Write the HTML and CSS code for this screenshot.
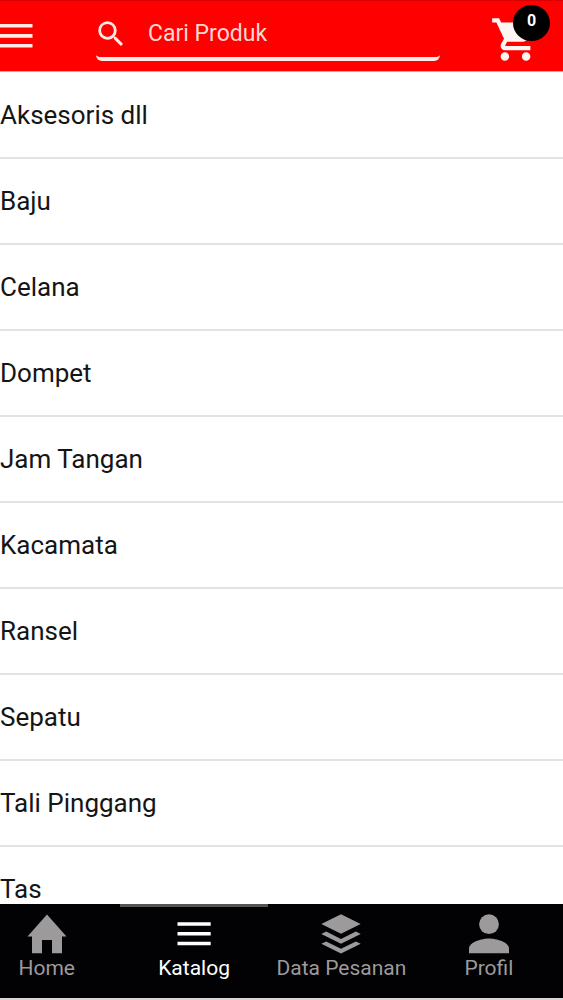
FILE: index.html
```
<!DOCTYPE html>
<html lang="id">
<head>
    <meta charset="UTF-8">
    <meta name="viewport" content="width=device-width, initial-scale=1">
    <title>Katalog</title>
    <link rel="stylesheet" href="styles.css">
</head>
<body>

<div class="page">
    <header class="m-header">
        <a href="#" class="u-menu">
            <svg width="33" height="24" viewBox="0 0 33 24"><path d="M0 0h32.5v3.6H0zM0 10.1h32.5v3.6H0zM0 20h32.5v3.6H0z"/></svg>
        </a>
        <div class="u-search">
            <svg width="34" height="34" viewBox="0 0 24 24"><path d="M15.5 14h-.79l-.28-.27A6.471 6.471 0 0 0 16 9.5 6.5 6.5 0 1 0 9.5 16c1.61 0 3.09-.59 4.23-1.57l.27.28v.79l5 4.99L20.49 19l-4.99-5zm-6 0C7.01 14 5 11.99 5 9.5S7.01 5 9.5 5 14 7.01 14 9.5 11.99 14 9.5 14z"/></svg>
            <span>Cari Produk</span>
        </div>
        <a href="#" class="u-cart">
            <svg width="51" height="51" viewBox="0 0 24 24"><path d="M7 18c-1.1 0-1.99.9-1.99 2S5.9 22 7 22s2-.9 2-2-.9-2-2-2zM1 2v2h2l3.6 7.59-1.35 2.45c-.16.28-.25.61-.25.96 0 1.1.9 2 2 2h12v-2H7.42c-.14 0-.25-.11-.25-.25l.03-.12.9-1.63h7.45c.75 0 1.41-.41 1.75-1.03l3.58-6.49A1.003 1.003 0 0 0 20 4H5.21l-.94-2H1zm16 16c-1.1 0-1.99.9-1.99 2s.89 2 1.99 2 2-.9 2-2-.9-2-2-2z"/></svg>
            <span class="badge">0</span>
        </a>
    </header>

    <ul class="m-list">
        <li>Aksesoris dll</li>
        <li>Baju</li>
        <li>Celana</li>
        <li>Dompet</li>
        <li>Jam Tangan</li>
        <li>Kacamata</li>
        <li>Ransel</li>
        <li>Sepatu</li>
        <li>Tali Pinggang</li>
        <li>Tas</li>
    </ul>

    <nav class="m-tabs">
        <a href="#">
            <svg width="40" height="40" viewBox="0 0 40 40"><path d="M20 .5L39.5 22.5H35V39.2H25V26H15v13.2H5V22.5H.5z"/></svg>
            <span>Home</span>
        </a>
        <a href="#" class="on">
            <svg width="40" height="40" viewBox="0 0 40 40"><path d="M3.5 8.3h33.2v3.5H3.5zM3.5 18.1h33.2v3.5H3.5zM3.5 27.8h33.2v3.5H3.5z"/></svg>
            <span>Katalog</span>
        </a>
        <a href="#">
            <svg width="40" height="40" viewBox="0 0 40 40"><path d="M20 .3L39.7 10 20 19.8.3 10zM5.2 17.6L20 25l14.8-7.4 4.9 2.4L20 29.7.3 20zM5.2 27.4L20 34.7l14.8-7.3 4.9 2.4L20 39.5.3 29.8z"/></svg>
            <span>Data Pesanan</span>
        </a>
        <a href="#">
            <svg width="40" height="40" viewBox="0 0 40 40"><circle cx="20" cy="10.2" r="9.9"/><path d="M0 39.300v-4.800C0 28 13 24.500 20 24.500S40 28 40 34.500v4.800z"/></svg>
            <span>Profil</span>
        </a>
    </nav>
</div>

</body>
</html>
```
FILE: styles.css
```
*{ margin: 0; padding: 0; box-sizing: border-box; text-decoration: none;}
body {font-family: Roboto, "Liberation Sans", sans-serif;background: #fff;color: #151515;}
svg {display: block;flex: none;fill: currentColor;}
.page {display: flex;flex-direction: column;height: 1000px;overflow: hidden;}

.m-header {flex: none;display: flex;height: 72px;background: #fe0000;border-top: 1px solid #d90000;border-bottom: 1px solid #ff9b9b;color: #ffe9e7;}
.u-menu {width: 96px;padding-top: 23px;color: #ffe9e7;}
.u-search {display: flex;width: 344px;height: 60px;border-bottom: 4px solid #ffe9e7;border-radius: 6px;}
.u-search svg {margin: 16px 0 0 -2px;}
.u-search span {margin: 18px 0 0 20px;font-size: 23px;line-height: 30px;color: #ffd6d4;}
.u-cart {position: relative;margin: 13px 0 0 50px;color: #fff5f3;}
.badge {position: absolute;left: 23px;top: -9px;width: 37px;height: 36px;border-radius: 50%;background: #000;color: #fff;font-size: 16px;font-weight: 700;line-height: 32px;text-align: center;}

.m-list {flex: 1;min-height: 0;overflow: hidden;padding-top: 1px;list-style: none;}
.m-list li {height: 86px;border-bottom: 2px solid #e2e2e2;font-size: 26px;line-height: 84px;white-space: nowrap;}

.m-tabs {flex: none;display: flex;height: 96px;margin-right: -10px;background: #020103;border-bottom: 2px solid #d8d5d5;}
.m-tabs a {flex: none;width: 147.4px;padding-top: 7px;border-top: 3px solid transparent;display: flex;flex-direction: column;align-items: center;color: #9c9a9b;}
.m-tabs a:first-child {margin-left: -27px;}
.m-tabs span {margin-top: 2px;font-size: 21px;line-height: 25px;white-space: nowrap;}
.m-tabs .on {border-top-color: #555354;color: #fff;}
```
